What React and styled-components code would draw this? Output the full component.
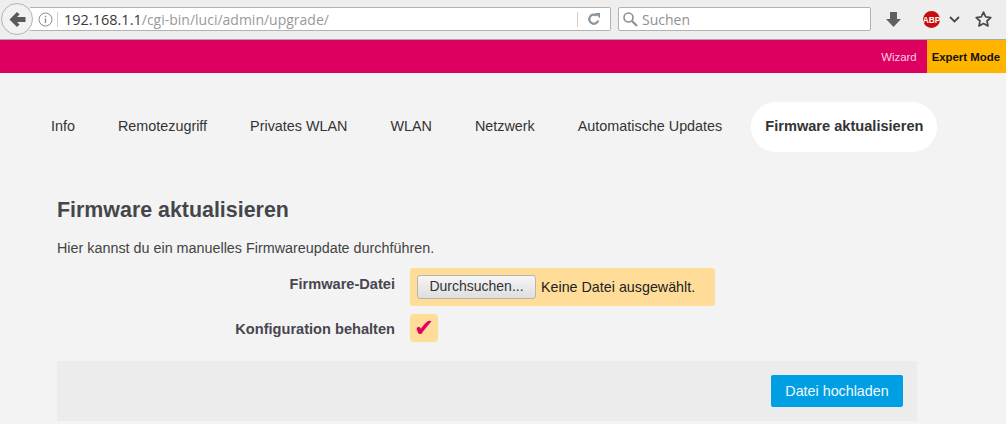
import React from 'react';
import styled, { createGlobalStyle } from 'styled-components';

const Global = createGlobalStyle`
  html, body {
    margin: 0;
    padding: 0;
    height: 424px;
    overflow: hidden;
    background: #f3f3f3;
    font-family: "Liberation Sans", Arial, sans-serif;
  }
`;

// browser toolbar
const Toolbar = styled.div`
  display: flex;
  align-items: center;
  height: 38px;
  padding-bottom: 1px;
  background: #eeeeee;
  border-bottom: 1px solid #a8a8a8;
  font-family: "Open Sans", "DejaVu Sans", sans-serif;
`;

const BackButton = styled.div`
  flex: none;
  display: flex;
  align-items: center;
  justify-content: center;
  width: 30px;
  height: 30px;
  margin-left: 1px;
  margin-right: -3px;
  z-index: 1;
  border-radius: 50%;
  background: #f2f2f2;
  border: 1px solid #b4b4b4;
`;

const UrlBar = styled.div`
  flex: none;
  display: flex;
  align-items: center;
  width: 580px;
  height: 22px;
  background: #fff;
  border: 1px solid #b2b2b2;
  border-left: none;
  border-radius: 0 2px 2px 0;
`;

const InfoSlot = styled.div`
  flex: none;
  display: flex;
  align-items: center;
  justify-content: center;
  width: 24px;
  margin-left: 3px;
  height: 15px;
  border-right: 1px solid #cfcfcf;
`;

const UrlText = styled.div`
  flex: 1;
  padding-left: 6px;
  font-size: 14px;
  color: #999;
  white-space: nowrap;
  b {
    font-weight: 400;
    font-size: 14.5px;
    color: #3a3a3a;
  }
`;

const ReloadSlot = styled.div`
  flex: none;
  display: flex;
  align-items: center;
  justify-content: center;
  width: 32px;
  height: 15px;
  border-left: 1px solid #cfcfcf;
`;

const SearchBar = styled.div`
  flex: none;
  display: flex;
  align-items: center;
  gap: 4px;
  width: 248px;
  height: 22px;
  margin-left: 7px;
  padding-left: 3px;
  background: #fff;
  border: 1px solid #b2b2b2;
  border-radius: 2px;
  font-size: 14px;
  color: #8f8f8f;
`;

const ToolIcons = styled.div`
  display: flex;
  align-items: center;
  margin-left: 15px;
`;

const ToolIcon = styled.div`
  display: flex;
  align-items: center;
  margin-left: ${(p) => p.$gap || 0}px;
`;

// pink router header
const Header = styled.div`
  display: flex;
  justify-content: flex-end;
  align-items: stretch;
  height: 33px;
  background: #dd0060;
`;

const HeaderLink = styled.a`
  display: flex;
  align-items: center;
  padding: 0 ${(p) => (p.$active ? '6px' : '10px')} 0 ${(p) => (p.$active ? '5px' : '0')};
  font-size: 11.4px;
  font-weight: ${(p) => (p.$active ? 700 : 400)};
  color: ${(p) => (p.$active ? '#111' : '#f8d0e2')};
  background: ${(p) => (p.$active ? '#ffb400' : 'transparent')};
`;

const Nav = styled.nav`
  display: flex;
  gap: 15px;
  margin: 29px 0 0 37px;
`;

const NavItem = styled.a`
  height: 50px;
  line-height: 49px;
  padding: 0 14px;
  border-radius: 25px;
  font-size: ${(p) => (p.$active ? '14.6px' : '14.37px')};
  white-space: nowrap;
  color: #333;
  font-weight: ${(p) => (p.$active ? 700 : 400)};
  background: ${(p) => (p.$active ? '#fff' : 'transparent')};
`;

const Section = styled.section`
  width: 860px;
  margin: 45px 0 0 57px;
`;

const Title = styled.h2`
  margin: 0;
  font-size: 21.4px;
  line-height: 27px;
  font-weight: 700;
  color: #45464b;
`;

const Intro = styled.p`
  margin: 16px 0 0;
  font-size: 14.35px;
  line-height: 17px;
  color: #444;
`;

const FormRow = styled.div`
  display: flex;
  align-items: flex-start;
  margin-top: ${(p) => p.$top}px;
`;

const Label = styled.label`
  flex: none;
  width: 338px;
  padding-top: ${(p) => p.$pad}px;
  text-align: right;
  font-size: 14.6px;
  line-height: 17px;
  font-weight: 700;
  color: #484650;
`;

const Field = styled.div`
  display: flex;
  align-items: center;
  height: 38px;
  margin-left: 15px;
  padding: 0 20px 0 7px;
  border-radius: 3px;
  background: #ffdd99;
  font-size: 14.3px;
  color: #222;
`;

const CheckField = styled.div`
  display: flex;
  align-items: center;
  justify-content: center;
  width: 28px;
  height: 28px;
  margin-left: 15px;
  border-radius: 4px;
  background: #ffdd99;
  color: #e00061;
  font-family: "DejaVu Sans", sans-serif;
  font-size: 24px;
  line-height: 28px;
`;

const FileButton = styled.div`
  box-sizing: border-box;
  height: 24px;
  width: 119px;
  margin-right: 5px;
  text-align: center;
  line-height: 21px;
  font-size: 14px;
  color: #333;
  border: 1px solid #b5b5b5;
  border-radius: 3px;
  background: linear-gradient(#f6f6f6, #dedede);
`;

const Footer = styled.div`
  display: flex;
  justify-content: flex-end;
  align-items: center;
  height: 60px;
  margin-top: 19px;
  padding-right: 14px;
  background: #ececec;
`;

const Submit = styled.button`
  width: 132px;
  height: 32px;
  padding: 0;
  border: none;
  border-radius: 2px;
  background: #009fe3;
  color: #f2f9ff;
  font-family: inherit;
  font-size: 14.3px;
`;

const tabs = ['Info', 'Remotezugriff', 'Privates WLAN', 'WLAN', 'Netzwerk', 'Automatische Updates'];

export default function App() {
  return (
    <>
      <Global />
      <Toolbar>
        <BackButton>
          <svg width="17" height="15" viewBox="0 0 17 15">
            <path d="M8 0 L0.5 7.5 L8 15 L10.6 12.6 L8 10 H16.5 V5 H8 L10.6 2.4 Z" fill="#5a5a5a" />
          </svg>
        </BackButton>
        <UrlBar>
          <InfoSlot>
            <svg width="15" height="15" viewBox="0 0 15 15">
              <circle cx="7.5" cy="7.5" r="6.5" fill="none" stroke="#8c8c8c" />
              <rect x="6.8" y="6.5" width="1.4" height="4.5" fill="#8c8c8c" />
              <rect x="6.8" y="3.8" width="1.4" height="1.5" fill="#8c8c8c" />
            </svg>
          </InfoSlot>
          <UrlText><b>192.168.1.1</b>/cgi-bin/luci/admin/upgrade/</UrlText>
          <ReloadSlot>
            <svg width="14" height="14" viewBox="0 0 14 14">
              <path d="M11.3 8.5 A4.6 4.6 0 1 1 9.8 3.6" fill="none" stroke="#8795a0" strokeWidth="2.2" />
              <path d="M8 1 L13 1 L13 6.5 Z" fill="#8795a0" />
            </svg>
          </ReloadSlot>
        </UrlBar>
        <SearchBar>
          <svg width="16" height="16" viewBox="0 0 16 16">
            <circle cx="6.5" cy="6.5" r="4.5" fill="none" stroke="#8f8f8f" strokeWidth="1.6" />
            <path d="M10 10 L15 15" stroke="#8f8f8f" strokeWidth="2.2" />
          </svg>
          Suchen
        </SearchBar>
        <ToolIcons>
          <ToolIcon>
            <svg width="15" height="15" viewBox="0 0 15 15">
              <path d="M4 0 H11 V7 H15 L7.5 15 L0 7 H4 Z" fill="#606060" />
            </svg>
          </ToolIcon>
          <ToolIcon $gap={22}>
            <svg width="17" height="17" viewBox="0 0 17 17">
              <circle cx="8.5" cy="8.5" r="8.5" fill="#c70d0d" />
              <text x="8.5" y="11.5" textAnchor="middle" fontSize="8.4" fontWeight="700" fontFamily="Liberation Sans" fill="#fff">ABP</text>
            </svg>
          </ToolIcon>
          <ToolIcon $gap={9}>
            <svg width="11" height="7" viewBox="0 0 11 7">
              <path d="M1 1 L5.5 5.5 L10 1" fill="none" stroke="#4a4a4a" strokeWidth="1.8" />
            </svg>
          </ToolIcon>
          <ToolIcon $gap={15}>
            <svg width="17" height="16" viewBox="0 0 17 16">
              <path d="M8.5 1.2 L10.7 5.9 L15.8 6.5 L12 10 L13 15 L8.5 12.5 L4 15 L5 10 L1.2 6.5 L6.3 5.9 Z" fill="none" stroke="#4a4a4a" strokeWidth="1.7" strokeLinejoin="round" />
            </svg>
          </ToolIcon>
        </ToolIcons>
      </Toolbar>
      <Header>
        <HeaderLink>Wizard</HeaderLink>
        <HeaderLink $active>Expert Mode</HeaderLink>
      </Header>
      <Nav>
        {tabs.map((tab) => (
          <NavItem key={tab}>{tab}</NavItem>
        ))}
        <NavItem $active>Firmware aktualisieren</NavItem>
      </Nav>
      <Section>
        <Title>Firmware aktualisieren</Title>
        <Intro>Hier kannst du ein manuelles Firmwareupdate durchführen.</Intro>
        <FormRow $top={11}>
          <Label $pad={8}>Firmware-Datei</Label>
          <Field>
            <FileButton>Durchsuchen...</FileButton>
            Keine Datei ausgewählt.
          </Field>
        </FormRow>
        <FormRow $top={8}>
          <Label $pad={7}>Konfiguration behalten</Label>
          <CheckField>✔</CheckField>
        </FormRow>
        <Footer>
          <Submit>Datei hochladen</Submit>
        </Footer>
      </Section>
    </>
  );
}
